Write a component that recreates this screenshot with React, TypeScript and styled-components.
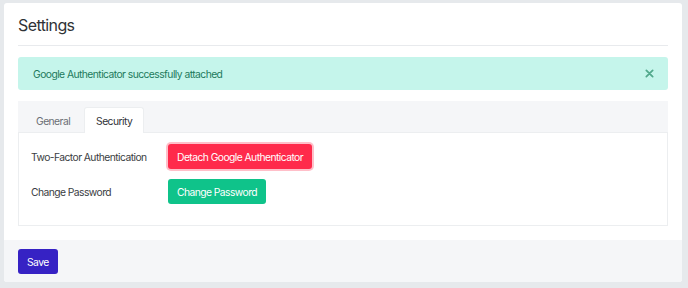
import React from 'react';
import styled, { createGlobalStyle } from 'styled-components';

const Global = createGlobalStyle`
  html, body {
    margin: 0;
    background: #e6e9ec;
  }
  body {
    padding: 3px 6px 6px 4px;
    font-family: Inter, "Noto Sans", sans-serif;
    font-size: 10.3px;
    letter-spacing: -0.55px;
    color: #3a3d42;
  }
`;

export default function App() {
  return (
    <>
      <Global />
      <Card>
        <Body>
          <Title>Settings</Title>
          <Alert role="alert">
            <span>Google Authenticator successfully attached</span>
            <Close aria-label="Close">
              <svg width="9" height="9" viewBox="0 0 10 10">
                <path d="M1.5 1.5l7 7M8.5 1.5l-7 7" stroke="currentColor" strokeWidth="2" strokeLinecap="round" />
              </svg>
            </Close>
          </Alert>
          <Tabs>
            <TabBar>
              <Tab>General</Tab>
              <Tab active>Security</Tab>
            </TabBar>
            <Panel>
              <Row>
                <Label>Two-Factor Authentication</Label>
                <Button variant="danger">Detach Google Authenticator</Button>
              </Row>
              <Row>
                <Label>Change Password</Label>
                <Button variant="success">Change Password</Button>
              </Row>
            </Panel>
          </Tabs>
        </Body>
        <Footer>
          <Button variant="primary">Save</Button>
        </Footer>
      </Card>
    </>
  );
}

const Card = styled.div`
  background: #fff;
  border-radius: 3px;
  overflow: hidden;
  height: 279px;
  display: flex;
  flex-direction: column;
`;

const Body = styled.div`
  padding: 0 14px;
  flex: 1;
`;

const Title = styled.h1`
  margin: 0;
  height: 43px;
  display: flex;
  align-items: center;
  padding-top: 2px;
  font-size: 16px;
  letter-spacing: -0.6px;
  font-weight: 400;
  color: #2f3236;
  border-bottom: 1px solid #e8eaed;
  box-sizing: border-box;
`;

const Alert = styled.div`
  margin-top: 11px;
  height: 33px;
  box-sizing: border-box;
  padding: 0 15px;
  display: flex;
  align-items: center;
  justify-content: space-between;
  background: #c5f5eb;
  border-radius: 3px;
  color: #1d7a5c;
`;

const Close = styled.span`
  display: flex;
  color: #52a98c;
  margin-right: -1px;
`;

const Tabs = styled.div`
  margin-top: 11px;
`;

const TabBar = styled.div`
  display: flex;
  gap: 2px;
  background: #f5f6f8;
  padding: 6px 6px 0;
  border-bottom: 1px solid #eceef0;
`;

const Tab = styled.div<{ active?: boolean }>`
  height: 26px;
  box-sizing: border-box;
  padding: 0 11px;
  display: flex;
  align-items: center;
  color: ${({ active }) => (active ? '#2f3236' : '#6b6f75')};
  background: ${({ active }) => (active ? '#fff' : 'transparent')};
  border: 1px solid ${({ active }) => (active ? '#eceef0' : 'transparent')};
  border-bottom: none;
  border-radius: 3px 3px 0 0;
  margin-bottom: -1px;
`;

const Panel = styled.div`
  border: 1px solid #eceef0;
  border-top: none;
  padding: 11px 12px 21px;
  display: flex;
  flex-direction: column;
  gap: 10px;
`;

const Row = styled.div`
  display: flex;
  align-items: center;
`;

const Label = styled.div`
  width: 137px;
  color: #3a3d42;
`;

const colors = {
  danger: '#ff2a4b',
  success: '#0fc38a',
  primary: '#3622c4',
};

const Button = styled.button<{ variant: keyof typeof colors }>`
  height: 25px;
  padding: 0 9px;
  border: none;
  border-radius: 3px;
  font-family: inherit;
  font-size: inherit;
  letter-spacing: inherit;
  color: #fff;
  background: ${({ variant }) => colors[variant]};
  box-shadow: ${({ variant }) =>
    variant === 'danger' ? '0 0 0 2px rgba(255, 42, 75, 0.3)' : 'none'};
`;

const Footer = styled.div`
  background: #f5f6f8;
  height: 42px;
  box-sizing: border-box;
  padding: 9px 14px;
  display: flex;
  align-items: flex-start;
`;
